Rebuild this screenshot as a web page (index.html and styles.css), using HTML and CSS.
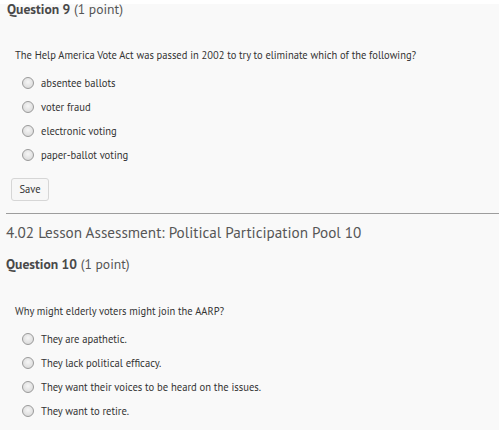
FILE: index.html
```html
<!DOCTYPE html>
<html>
<head>
<meta charset="utf-8">
<link rel="stylesheet" href="styles.css">
</head>
<body>
<div class="page">
  <h2 class="qtitle first"><b>Question 9</b> (1 point)</h2>
  <p class="qtext">The Help America Vote Act was passed in 2002 to try to eliminate which of the following?</p>
  <ul class="opts">
    <li><span class="radio"></span><span>absentee ballots</span></li>
    <li><span class="radio"></span><span>voter fraud</span></li>
    <li><span class="radio"></span><span>electronic voting</span></li>
    <li><span class="radio"></span><span>paper-ballot voting</span></li>
  </ul>
  <div class="savewrap"><button class="save">Save</button></div>
  <hr class="divider">
  <h1 class="section">4.02 Lesson Assessment: Political Participation Pool 10</h1>
  <h2 class="qtitle second"><b>Question 10</b> (1 point)</h2>
  <p class="qtext later">Why might elderly voters might join the AARP?</p>
  <ul class="opts">
    <li><span class="radio"></span><span>They are apathetic.</span></li>
    <li><span class="radio"></span><span>They lack political efficacy.</span></li>
    <li><span class="radio"></span><span>They want their voices to be heard on the issues.</span></li>
    <li><span class="radio"></span><span>They want to retire.</span></li>
  </ul>
</div>
</body>
</html>
```
FILE: styles.css
```css
html, body {
  margin: 0;
  padding: 0;
}
body {
  background: linear-gradient(to bottom, #ffffff 0, #ffffff 4px, #f9f9f9 4px, #f9f9f9 100%);
}
.page {
  font-family: "PT Sans", "Open Sans", "Noto Sans", sans-serif;
  color: #333;
  width: 499px;
  height: 430px;
  overflow: hidden;
}
.qtitle {
  margin: 0;
  padding-left: 7px;
  font-size: 13.6px;
  font-weight: normal;
  color: #555;
  line-height: 18px;
}
.qtitle.first {
  padding-top: 0;
}
.qtitle b {
  font-weight: bold;
  color: #494949;
}
.qtext {
  margin: 0;
  padding: 30px 0 0 15px;
  font-size: 10.5px;
  line-height: 14px;
  color: #333;
}
.qtext.later {
  padding-top: 31px;
}
.opts {
  list-style: none;
  margin: 0;
  padding: 9px 0 0 22px;
}
.opts li {
  display: flex;
  align-items: center;
  gap: 7px;
  height: 24px;
  font-size: 10.6px;
  color: #333;
}
.radio {
  width: 12px;
  height: 12px;
  border-radius: 50%;
  border: 1px solid #9a9a9a;
  background: radial-gradient(circle at 50% 40%, #f6f6f6 0%, #dedede 70%, #cfcfcf 100%);
  box-sizing: border-box;
  flex: none;
}
.savewrap {
  padding: 10px 0 0 11px;
}
.save {
  font-family: inherit;
  font-size: 10.5px;
  color: #333;
  width: 38px;
  height: 23px;
  border: 1px solid #d6d6d6;
  border-radius: 3px;
  background: #f7f7f7;
  padding: 0;
}
.divider {
  margin: 12px 0 0 6px;
  border: 0;
  border-top: 1px solid #9d9d9d;
  height: 0;
}
.section {
  margin: 0;
  padding: 9px 0 0 6px;
  font-size: 15.2px;
  font-weight: normal;
  color: #565656;
  line-height: 20px;
}
.qtitle.second {
  padding-top: 12px;
  padding-left: 6px;
}
```
